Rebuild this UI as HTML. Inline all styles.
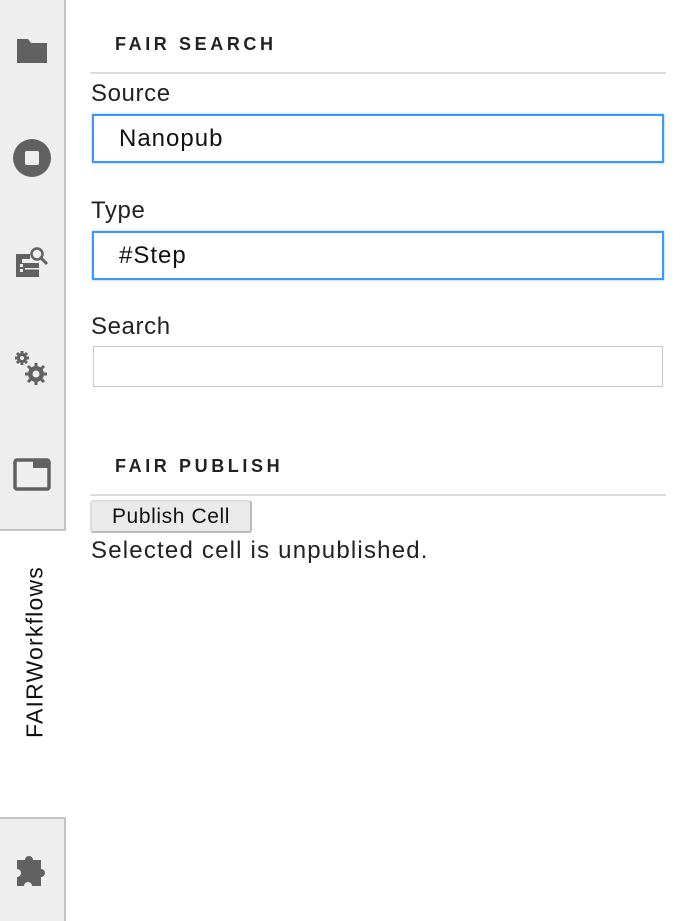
<!DOCTYPE html>
<html><head><style>
body{margin:0;width:690px;height:921px;background:#fff;font-family:"Liberation Sans",sans-serif;position:relative;overflow:hidden;color:#111}
.side{position:absolute;left:0;top:0;width:64px;height:921px;background:#eee;border-right:2px solid #c4c4c4}
.act{position:absolute;left:0;top:529px;width:66px;height:286px;background:#fff;border-top:2px solid #c4c4c4;border-bottom:2px solid #c4c4c4}
.vt{position:absolute;left:35px;top:652px;transform:translate(-50%,-50%) rotate(-90deg);font-size:23px;letter-spacing:1.2px;white-space:nowrap;color:#111}
.ic{position:absolute}
.h{position:absolute;left:115px;font-size:18px;font-weight:bold;letter-spacing:3.6px;color:#222}
.hr{position:absolute;left:90px;width:576px;height:2px;background:#ddd}
.lb{position:absolute;left:91px;font-size:24px;letter-spacing:0.6px;color:#222}
.in{position:absolute;left:92px;width:572px;box-sizing:border-box;border:2px solid #3b99fc;box-shadow:0 0 2px #7bb8f8;font-size:24px;letter-spacing:1px;padding-left:25px;display:flex;align-items:center}
</style></head><body>
<div class="side"></div>
<div class="act"></div>
<div class="vt">FAIRWorkflows</div>
<svg class="ic" style="left:15px;top:37px" width="34" height="28" viewBox="0 0 34 28"><path d="M2 2h11l3 4h16v20H2z" fill="#616161" rx="2"/></svg>
<svg class="ic" style="left:12px;top:138px" width="40" height="40"><circle cx="20" cy="20" r="19" fill="#616161"/><rect x="13" y="13" width="14" height="14" rx="2" fill="#eee"/></svg>
<svg class="ic" style="left:14px;top:246px" width="36" height="36" viewBox="0 0 36 36"><path d="M2 8h14v5h-8v4h17v14H2z" fill="#616161"/><rect x="6" y="18" width="3" height="3" fill="#eee"/><rect x="6" y="23" width="3" height="3" fill="#eee"/><rect x="11" y="22" width="14" height="1.5" fill="#eee"/><circle cx="23" cy="8" r="5.5" fill="none" stroke="#616161" stroke-width="2.5"/><path d="M27 12l6 6" stroke="#616161" stroke-width="3"/></svg>
<svg class="ic" style="left:14px;top:350px" width="36" height="36" viewBox="0 0 36 36"><g fill="#616161"><circle cx="8" cy="8" r="5"/><circle cx="22" cy="24" r="8"/></g><g stroke="#616161" stroke-width="3"><path d="M8 1v14M1 8h14M3 3l10 10M13 3L3 13"/><path d="M22 13v22M11 24h22M14 16l16 16M30 16L14 32"/></g><circle cx="8" cy="8" r="2" fill="#eee"/><circle cx="22" cy="24" r="3.5" fill="#eee"/></svg>
<svg class="ic" style="left:13px;top:457px" width="38" height="34"><rect x="2" y="3" width="34" height="29" rx="2" fill="none" stroke="#616161" stroke-width="3.5"/><rect x="20" y="3" width="16" height="8" fill="#616161"/></svg>
<svg class="ic" style="left:14px;top:850px" width="38" height="38" viewBox="0 0 38 38"><path d="M3 10h8a4 4 0 1 1 8 0h8v9a4 4 0 1 1 0 8v9h-9a4 4 0 1 0-8 0H3v-9a4 4 0 1 0 0-8z" fill="#616161"/></svg>
<div class="h" style="top:34px">FAIR SEARCH</div>
<div class="hr" style="top:72px"></div>
<div class="lb" style="top:80px">Source</div>
<div class="in" style="top:114px;height:49px">Nanopub</div>
<div class="lb" style="top:197px">Type</div>
<div class="in" style="top:231px;height:49px">#Step</div>
<div class="lb" style="top:313px">Search</div>
<div style="position:absolute;left:93px;top:346px;width:570px;height:41px;box-sizing:border-box;border:1px solid #c8c8c8"></div>
<div class="h" style="top:456px">FAIR PUBLISH</div>
<div class="hr" style="top:494px"></div>
<div style="position:absolute;left:90px;top:500px;width:162px;height:33px;box-sizing:border-box;background:#eaeaea;border:2px solid #bbb;border-top-color:#ddd;border-left-color:#ddd;border-radius:3px;font-size:21px;letter-spacing:0.6px;text-align:center;line-height:30px">Publish Cell</div>
<div style="position:absolute;left:91px;top:537px;font-size:24px;letter-spacing:1.2px;color:#222">Selected cell is unpublished.</div>
</body></html>
